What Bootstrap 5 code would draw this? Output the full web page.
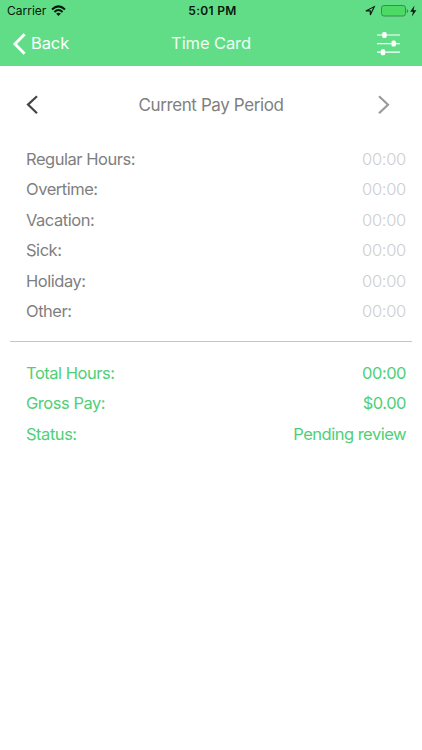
<!DOCTYPE html>
<html lang="en">
<head>
<meta charset="utf-8">
<meta name="viewport" content="width=device-width, initial-scale=1">
<title>Time Card</title>
<link href="https://cdn.jsdelivr.net/npm/bootstrap@5.3.0/dist/css/bootstrap.min.css" rel="stylesheet">
<style>
body{font-family:Inter,"Liberation Sans",sans-serif;font-size:16.5px;letter-spacing:-.47px;color:#7f7f7f;background:#fff;min-height:100vh}
svg{display:block;flex:none}
.app-top{background:#62dd87;height:66px}
.status-line{height:22px;font-size:12px;line-height:22px;color:#06180c;padding:0 5px 0 7px;letter-spacing:0}
.side{flex:1 1 0}
.clock{font-weight:600;letter-spacing:.3px;padding-left:1px}
.title-line{height:43px;line-height:43px;color:#fff;padding:0 21px 0 12px;letter-spacing:-.1px}
.title-line .screen-title{color:#effff3;margin:0 -5px 0 4px}
.period{height:77.6px;padding:0 32px 0 26px}
.period-name{font-size:17px;letter-spacing:-.4px;padding:1px 0 0 6px}
.entry{height:30.5px;line-height:30.5px;padding:0 16px 0 26px}
.amount{color:#cecece;font-weight:300;letter-spacing:-.3px}
.divider{height:1px;background:#c6c6c6;margin:14.4px 10px 15.6px}
.totals{color:#4fd077}
.totals .entry span+span{letter-spacing:-.5px}
</style>
<script src="https://cdn.jsdelivr.net/npm/bootstrap@5.3.0/dist/js/bootstrap.bundle.min.js"></script>
</head>
<body>
<header class="app-top">
  <div class="status-line d-flex align-items-center">
    <div class="side d-flex align-items-center"><span class="carrier">Carrier</span>
      <svg class="ms-1" width="17" height="12" viewBox="0 0 17 12" fill="none" stroke="#06180c"><path d="M2 4.4Q8.5-1.7 15 4.4" stroke-width="2"/><path d="M4.4 7Q8.5 3 12.6 7" stroke-width="1.9"/><path d="M6.1 8.6Q8.5 6.7 10.9 8.6L8.5 11z" fill="#06180c" stroke="none"/></svg>
    </div>
    <span class="clock">5:01 PM</span>
    <div class="side d-flex align-items-center justify-content-end">
      <svg width="52" height="14" viewBox="0 0 52 14"><path d="M.8 6.9 9.3 2.6 5.3 11.1V6.9z" fill="none" stroke="#06180c" stroke-width="1.1"/><rect x="16.5" y="1.5" width="24" height="10.5" rx="2.4" fill="#4cd964" stroke="#3e8a55"/><path d="M41.8 5v4.2q1.5-.6 1.5-2.1T41.8 5" fill="#3e8a55"/><path d="M49.5 1.6 45.2 7.8H48L46.8 12.4 51.4 6.3H48.5z" fill="#06180c"/></svg>
    </div>
  </div>
  <nav class="title-line d-flex align-items-center">
    <div class="side d-flex align-items-center">
      <svg width="15" height="24" viewBox="0 0 15 24"><path d="M12.6 2.3 3 12l9.6 9.7" fill="none" stroke="#fff" stroke-width="2.9"/></svg>
      <span class="back-label ms-1">Back</span>
    </div>
    <span class="screen-title">Time Card</span>
    <div class="side d-flex justify-content-end">
      <svg width="25" height="26" viewBox="0 0 25 26" fill="#fff"><path d="M1 3.4h23v1.2H1zM1 12h23v1.2H1zM1 20.6h23v1.2H1z"/><rect x="6.2" y="1" width="4.4" height="6" rx="1.5"/><rect x="15.5" y="9.6" width="4.4" height="6" rx="1.5"/><rect x="4.8" y="18.2" width="4.4" height="6" rx="1.5"/></svg>
    </div>
  </nav>
</header>
<main>
  <div class="period d-flex align-items-center justify-content-between">
    <svg width="13" height="20" viewBox="0 0 13 20"><path d="M11 1.3 2 9.6l9 8.7" fill="none" stroke="#42464a" stroke-width="2.2"/></svg>
    <span class="period-name">Current Pay Period</span>
    <svg width="13" height="20" viewBox="0 0 13 20"><path d="M2 1.3l9 8.4-9 8.6" fill="none" stroke="#9b9b9b" stroke-width="2.2"/></svg>
  </div>
  <div class="entry d-flex justify-content-between"><span>Regular Hours:</span><span class="amount">00:00</span></div>
  <div class="entry d-flex justify-content-between"><span>Overtime:</span><span class="amount">00:00</span></div>
  <div class="entry d-flex justify-content-between"><span>Vacation:</span><span class="amount">00:00</span></div>
  <div class="entry d-flex justify-content-between"><span>Sick:</span><span class="amount">00:00</span></div>
  <div class="entry d-flex justify-content-between"><span>Holiday:</span><span class="amount">00:00</span></div>
  <div class="entry d-flex justify-content-between"><span>Other:</span><span class="amount">00:00</span></div>
  <div class="divider"></div>
  <div class="totals">
    <div class="entry d-flex justify-content-between"><span>Total Hours:</span><span>00:00</span></div>
    <div class="entry d-flex justify-content-between"><span>Gross Pay:</span><span>$0.00</span></div>
    <div class="entry d-flex justify-content-between"><span>Status:</span><span>Pending review</span></div>
  </div>
</main>
</body>
</html>
